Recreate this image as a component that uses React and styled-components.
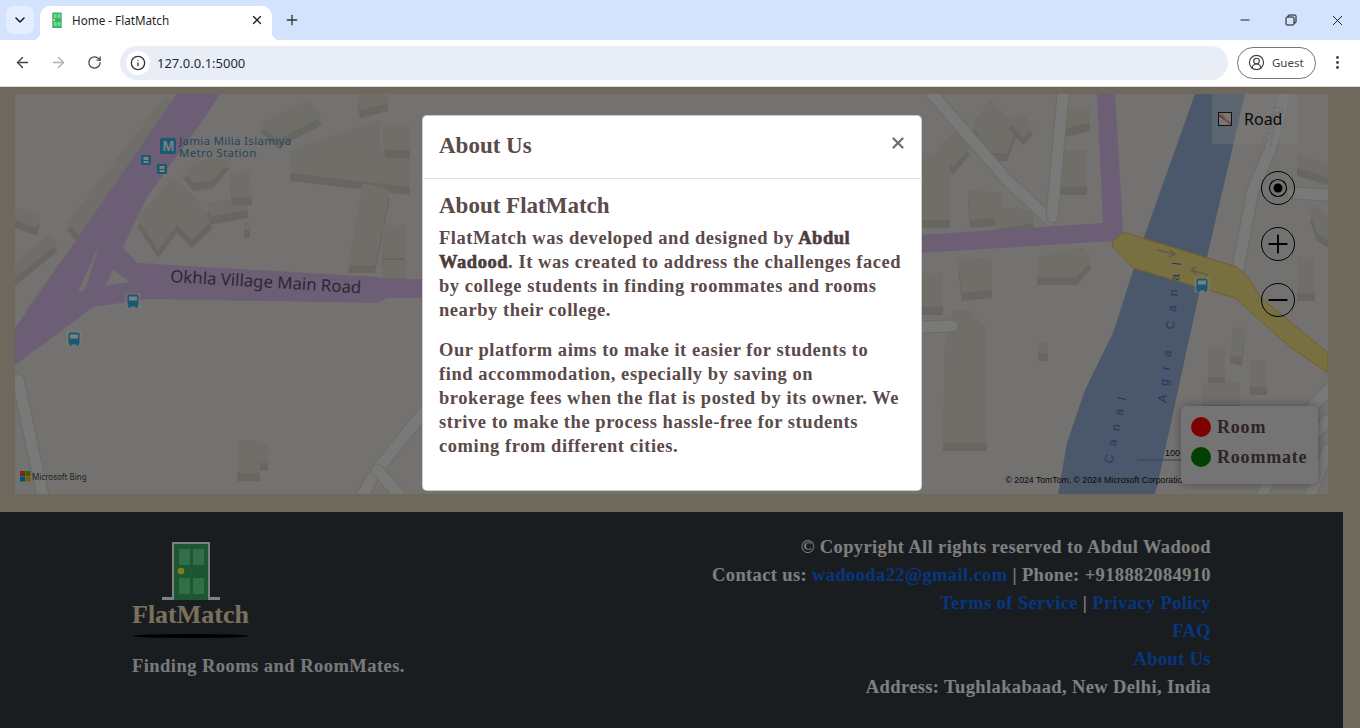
// App.jsx
import React from 'react';
import styled, { createGlobalStyle } from 'styled-components';
import { ArrowLeft, ArrowRight, RotateCw, Info, X, Plus, Minus, ChevronDown, CircleUserRound, EllipsisVertical } from 'lucide-react';

const GlobalStyle = createGlobalStyle`
  html, body { margin: 0; padding: 0; height: 100%; overflow: hidden; }
  body { font-family: "Liberation Serif", serif; }
`;

const Root = styled.div`
  width: 1360px;
  height: 728px;
  display: flex;
  flex-direction: column;
  overflow: hidden;
`;

/* browser chrome */
const TabStrip = styled.div`
  height: 40px;
  background: #d3e3fd;
  display: flex;
  align-items: flex-end;
  padding-left: 6px;
  flex: none;
`;
const TabSearch = styled.div`
  width: 28px;
  height: 28px;
  margin: 0 6px 6px 0;
  border-radius: 8px;
  background: #e4edfd;
  color: #1f1f1f;
  display: flex;
  align-items: center;
  justify-content: center;
`;
const Tab = styled.div`
  position: relative;
  width: 232px;
  height: 34px;
  box-sizing: border-box;
  padding: 0 8px 6px 9px;
  background: #fff;
  border-radius: 10px 10px 0 0;
  display: flex;
  align-items: center;
  color: #1f1f1f;
  font: 11.7px "Noto Sans", sans-serif;
  &::before, &::after {
    content: '';
    position: absolute;
    bottom: 0;
    width: 8px;
    height: 8px;
  }
  &::before { left: -8px; background: radial-gradient(circle at 0 0, #d3e3fd 8px, #fff 8.5px); }
  &::after { right: -8px; background: radial-gradient(circle at 100% 0, #d3e3fd 8px, #fff 8.5px); }
`;
const TabTitle = styled.span`
  flex: 1;
  margin-left: 7px;
`;
const NewTab = styled.div`
  margin: 0 0 12px 12px;
  color: #333;
  display: flex;
`;
const WindowControls = styled.div`
  margin-left: auto;
  height: 40px;
  display: flex;
  align-items: center;
`;
const WindowButton = styled.div`
  width: 46px;
  height: 40px;
  display: flex;
  align-items: center;
  justify-content: center;
  color: #111;
`;
const Toolbar = styled.div`
  height: 47px;
  box-sizing: border-box;
  background: #fff;
  border-radius: 8px 8px 0 0;
  border-bottom: 1px solid #d8d8d8;
  display: flex;
  align-items: center;
  padding: 0 0 1px 4px;
  flex: none;
`;
const NavButton = styled.div`
  width: 36px;
  height: 36px;
  display: flex;
  align-items: center;
  justify-content: center;
  color: ${p => (p.$off ? '#b0b0b0' : '#444')};
`;
const Omnibox = styled.div`
  width: 1108px;
  height: 34px;
  margin-left: 8px;
  background: #e9eef6;
  border-radius: 17px;
  display: flex;
  align-items: center;
  padding-left: 6px;
  box-sizing: border-box;
  font: 13px "Noto Sans", sans-serif;
  color: #1f2a3a;
`;
const InfoChip = styled.div`
  width: 24px;
  height: 24px;
  border-radius: 50%;
  background: #fff;
  color: #333;
  display: flex;
  align-items: center;
  justify-content: center;
  margin-right: 7px;
`;
const GuestPill = styled.div`
  width: 79px;
  height: 32px;
  box-sizing: border-box;
  margin-left: 9px;
  border: 1px solid #777;
  border-radius: 16px;
  display: flex;
  align-items: center;
  gap: 7px;
  padding-left: 10px;
  color: #444;
  font: 11.5px "Noto Sans", sans-serif;
`;
const MenuDots = styled.div`
  margin-left: 13px;
  display: flex;
  color: #444;
`;

/* page */
const Viewport = styled.div`
  position: relative;
  flex: 1;
  min-height: 0;
  background: #dcd2b8;
`;
const Page = styled.div`
  width: 1343px;
  height: 100%;
  display: flex;
  flex-direction: column;
`;
const MapWrap = styled.div`
  position: relative;
  width: 1313px;
  height: 400px;
  margin: 7px 15px 18px;
  overflow: hidden;
  flex: none;
`;
const MapCanvas = styled.svg`
  display: block;
  width: 100%;
  height: 100%;
  background: #e6e4e0;
`;
const RoadPicker = styled.div`
  position: absolute;
  top: 0;
  left: 1197px;
  width: 86px;
  height: 50px;
  box-sizing: border-box;
  padding-left: 6px;
  background: rgba(255, 255, 255, 0.35);
  display: flex;
  align-items: center;
  gap: 12px;
  font: 16px "Noto Sans", sans-serif;
  color: #111;
`;
const RoadSwatch = styled.svg`
  width: 14px;
  height: 14px;
`;
const ZoomStack = styled.div`
  position: absolute;
  top: 77px;
  left: 1246px;
  display: flex;
  flex-direction: column;
  gap: 22px;
`;
const ZoomButton = styled.div`
  width: 34px;
  height: 34px;
  box-sizing: border-box;
  border: 1.5px solid #000;
  border-radius: 50%;
  display: flex;
  align-items: center;
  justify-content: center;
  color: #000;
`;
const Legend = styled.div`
  position: absolute;
  top: 312px;
  left: 1166px;
  width: 137px;
  height: 78px;
  box-sizing: border-box;
  padding: 11px 10px;
  background: #eaE9e8;
  border-radius: 5px;
  box-shadow: 0 0 10px rgba(0, 0, 0, 0.35);
  display: flex;
  flex-direction: column;
  gap: 10px;
`;
const LegendRow = styled.div`
  display: flex;
  align-items: center;
  gap: 6px;
  height: 20px;
  font: 700 18px "Liberation Serif", serif;
  color: #5a4a4a;
  letter-spacing: 0.8px;
`;
const LegendDot = styled.span`
  width: 20px;
  height: 20px;
  border-radius: 50%;
  background: ${p => p.$color};
`;

/* footer */
const Footer = styled.footer`
  flex: 1;
  background: #343a40;
  padding: 21px 132px 0;
  display: flex;
  justify-content: space-between;
  color: #fff;
  font: 700 18.5px/28px "Liberation Serif", serif;
  letter-spacing: 0.37px;
`;
const Brand = styled.div`
  display: flex;
  flex-direction: column;
  padding-top: 9px;
`;
const LogoBlock = styled.div`
  width: 117px;
  display: flex;
  flex-direction: column;
  align-items: center;
`;
const LogoName = styled.div`
  font: 700 26px/30px "Liberation Serif", serif;
  letter-spacing: 0;
  color: #f4e2b8;
`;
const LogoShadow = styled.div`
  width: 117px;
  height: 4px;
  margin-top: 4px;
  border-radius: 50%;
  background: #000;
`;
const Tagline = styled.div`
  margin-top: 14px;
  letter-spacing: 0.46px;
  color: #f0f4f8;
`;
const Contact = styled.div`
  text-align: right;
`;
const Line = styled.div`
  height: 28px;
`;
const FooterLink = styled.a`
  color: #0d6efd;
  text-decoration: none;
`;

/* modal */
const Backdrop = styled.div`
  position: absolute;
  inset: 0;
  background: rgba(0, 0, 0, 0.5);
`;
const Modal = styled.div`
  position: absolute;
  top: 28px;
  left: 422px;
  width: 500px;
  box-sizing: border-box;
  background: #fff;
  border: 1px solid rgba(0, 0, 0, 0.2);
  border-radius: 5px;
  color: #5a4a4a;
`;
const ModalHeader = styled.div`
  height: 63px;
  box-sizing: border-box;
  padding: 0 16px;
  border-bottom: 1px solid #dee2e6;
  display: flex;
  align-items: center;
  justify-content: space-between;
`;
const ModalTitle = styled.h5`
  margin: 0 0 3px;
  font: 700 23px/30px "Liberation Serif", serif;
`;
const CloseButton = styled.span`
  display: flex;
  color: #6f6f6f;
  margin: 0 -2px 8px 0;
`;
const ModalBody = styled.div`
  padding: 16px;
`;
const BodyHeading = styled.h4`
  margin: 0 0 9px;
  font: 700 23px/22px "Liberation Serif", serif;
`;
const Para = styled.p`
  max-width: 463px;
  margin: 0 0 16px;
  font: 700 18.5px/24px "Liberation Serif", serif;
  letter-spacing: 0.55px;
  strong { font-weight: 700; color: #4a3c3c; -webkit-text-stroke: 0.6px #4a3c3c; }
`;

const Door = ({ size }) => (
  <svg width={size} height={size} viewBox="0 0 58 58">
    <path d="M0 58v-3h10V0h38v55h10v3z" fill="#fff" />
    <rect x="12" y="2" width="34" height="56" fill="#3cab66" />
    <rect x="17" y="7" width="11" height="16" fill="#5ee08e" />
    <rect x="31" y="7" width="11" height="16" fill="#5ee08e" />
    <rect x="17" y="36" width="11" height="16" fill="#5ee08e" />
    <rect x="31" y="36" width="11" height="16" fill="#5ee08e" />
    <circle cx="19" cy="29" r="3.3" fill="#ffff30" />
  </svg>
);

const buildings = [
  '15,207 40,216 37,228 15,220', '15,262 50,234 58,243 15,278', '25,310 73,245 85,250 38,318',
  '67,223 167,94 183,120 100,257', '183,170 210,157 230,160 213,180 193,183',
  '137,218 173,178 190,192 213,220 192,240 177,225 158,250', '207,203 247,196 248,210 210,217',
  '230,173 250,171 252,197 232,197', '244,222 250,222 250,230 244,230', '260,123 310,100 322,117 277,140',
  '290,150 380,120 380,152 410,153 410,187 290,173', '363,183 390,190 375,265 348,265',
  '383,125 410,125 410,150 385,150', '382,225 405,225 405,258 382,258', '383,260 407,260 407,278 383,278',
  '357,94 388,94 388,103 360,110', '237,440 257,440 257,443 268,443 268,463 260,463 260,473 237,473',
  '937,147 957,130 970,147 953,167', '972,123 990,100 1017,127 1007,153 987,153',
  '1007,120 1023,113 1033,127 1023,137', '1060,110 1090,108 1090,123 1060,130',
  '1060,150 1087,150 1087,187 1060,187', '968,190 1003,193 1003,217 970,220',
  '995,207 1033,210 1033,223 995,230', '920,153 950,153 950,220 920,220', '920,273 943,273 943,307 920,307',
  '958,260 992,257 992,290 962,293', '1037,257 1083,247 1092,260 1077,277 1037,277',
  '953,310 970,310 987,330 987,443 943,443 945,340', '1038,342 1048,342 1048,353 1038,353',
  '1208,347 1225,347 1225,377 1208,377', '1233,327 1245,328 1242,358 1230,355',
  '1250,360 1267,360 1267,387 1250,387', '1202,383 1240,382 1240,405 1202,405',
  '1297,153 1328,163 1328,177 1297,168', '1310,213 1315,205 1328,217 1328,240 1317,233',
  '1297,257 1315,257 1315,293 1297,293',
];

const roads = [
  'M18,380 L43,496', 'M423,413 L377,470 L362,496', 'M377,470 L400,496', 'M1285,94 L1270,150 L1253,190 L1238,268',
  'M1293,193 L1328,195', 'M933,95 L1007,180 L1050,220', 'M1063,95 L1052,217', 'M920,327 L952,326',
  'M1328,390 L1290,430 L1262,496', 'M1328,420 L1300,450', 'M1328,450 L1310,496',
];

const Bus = ({ x, y, s }) => (
  <g transform={`translate(${x} ${y}) scale(${s})`}>
    <rect x="-1" y="-1" width="16" height="16" rx="2" fill="#ffffff" opacity="0.4" />
    <rect x="1.5" y="0.5" width="11" height="12" rx="2" fill="#30b4e8" />
    <rect x="3" y="2.5" width="8" height="4" fill="#ffffff" />
    <rect x="2.5" y="12" width="2" height="2" fill="#30b4e8" />
    <rect x="9.5" y="12" width="2" height="2" fill="#30b4e8" />
  </g>
);

const Stop = ({ x, y }) => (
  <g transform={`translate(${x} ${y})`}>
    <rect width="10" height="10" rx="1" fill="#30b4e8" />
    <rect x="2.5" y="2" width="5" height="3" fill="#ffffff" />
    <rect x="2.5" y="6" width="5" height="2" fill="#ffffff" />
  </g>
);

const MapDrawing = () => (
  <MapCanvas viewBox="15 94 1313 400">
    {buildings.map((pts, i) => (
      <g key={i}>
        <polygon points={pts} fill="#cecCC0" transform="translate(0 8)" />
        <polygon points={pts} fill="#dedcd2" />
      </g>
    ))}
    {roads.map((d, i) => (
      <g key={i} fill="none" strokeLinejoin="round" strokeLinecap="round">
        <path d={d} stroke="#dcd4bc" strokeWidth="13" />
        <path d={d} stroke="#f2f2f2" strokeWidth="11" />
      </g>
    ))}
    <polygon points="1195,94 1245,94 1207,257 1160,473 1155,494 1058,494 1067,443 1085,390 1113,333 1143,240" fill="#96aed4" />
    <polygon points="177,94 220,94 203,120 147,197 123,247 137,263 377,277 387,280 423,279 423,298 387,298 378,303 147,299 93,307 15,365 15,328 83,230" fill="#d8bce8" />
    <polygon points="113,270 130,282 105,286" fill="#e6e4e0" />
    <polygon points="100,243 78,292 85,290" fill="#e6e4e0" />
    <polygon points="1097,94 1115,94 1123,228 1122,236 1113,241 920,253 920,235 1103,223" fill="#d8bce8" />
    <polygon points="1123,232 1237,267 1248,277 1260,297 1328,353 1328,373 1290,347 1235,298 1133,268 1113,247 1112,242" fill="#f0e080" stroke="#eab858" />
    <path d="M1157,250l18,4m-5,-4l5,4l-6,3M1208,275l-17,-5m5,-3l-5,3l5,4" fill="none" stroke="#c4b490" strokeWidth="1.5" />

    <text x="170" y="282" transform="rotate(3.4 170 282)" fontFamily="Noto Sans, sans-serif" fontSize="16.8" fill="#5c4c70">Okhla Village Main Road</text>
    <rect x="160" y="138" width="16" height="16" rx="2" fill="#30b4e8" />
    <text x="162.5" y="151" fontFamily="Liberation Sans, sans-serif" fontSize="14" fontWeight="700" fill="#fff">M</text>
    <text fontFamily="Noto Sans, sans-serif" fontSize="11.5" fill="#4a90b8" letterSpacing="0.3">
      <tspan x="179" y="145">Jamia Milia Islamiya</tspan>
      <tspan x="179" y="157">Metro Station</tspan>
    </text>
    <Stop x={141} y={155} />
    <Stop x={157} y={164} />
    <Bus x={126} y={294} s={1} />
    <Bus x={67} y={332} s={1} />
    <Bus x={1195} y={278} s={1} />

    <g fontFamily="Liberation Sans, sans-serif" fontSize="12" fill="#4a70d0" letterSpacing="9">
      <text transform="translate(1166 403) rotate(-84)">Agra Canal</text>
      <text transform="translate(1112 464) rotate(-78)">Canal</text>
    </g>
    <text transform="translate(1271 146) rotate(-75)" fontFamily="Noto Sans, sans-serif" fontSize="13" fill="#cccccc">Sailing</text>

    <text x="1165" y="456" fontFamily="Liberation Sans, sans-serif" fontSize="9" fill="#111">100</text>
    <path d="M1137.5,460H1190" stroke="#4a90e0" strokeWidth="1" />
    <text x="1005.5" y="483" fontFamily="Liberation Sans, sans-serif" fontSize="8.7" fill="#111">© 2024 TomTom, © 2024 Microsoft Corporation</text>

    <rect x="20" y="471" width="5" height="5" fill="#f25022" />
    <rect x="25.5" y="471" width="5" height="5" fill="#7fba00" />
    <rect x="20" y="476.5" width="5" height="5" fill="#00a4ef" />
    <rect x="25.5" y="476.5" width="5" height="5" fill="#ffb900" />
    <text x="32" y="480" fontFamily="Noto Sans, sans-serif" fontSize="8" fill="#444">Microsoft Bing</text>
  </MapCanvas>
);

export default function App() {
  return (
    <Root>
      <GlobalStyle />
      <TabStrip>
        <TabSearch><ChevronDown size={16} strokeWidth={2.4} /></TabSearch>
        <Tab>
          <Door size={16} />
          <TabTitle>Home - FlatMatch</TabTitle>
          <X size={14} strokeWidth={2.2} />
        </Tab>
        <NewTab><Plus size={16} strokeWidth={2} /></NewTab>
        <WindowControls>
          <WindowButton><Minus size={14} strokeWidth={1.6} /></WindowButton>
          <WindowButton>
            <svg width="12" height="12" viewBox="0 0 12 12" fill="none" stroke="#111" strokeWidth="1">
              <rect x="1" y="3" width="8" height="8" rx="1" />
              <path d="M3 3V2a1 1 0 0 1 1-1h6a1 1 0 0 1 1 1v6a1 1 0 0 1-1 1H9" />
            </svg>
          </WindowButton>
          <WindowButton><X size={17} strokeWidth={1.3} /></WindowButton>
        </WindowControls>
      </TabStrip>
      <Toolbar>
        <NavButton><ArrowLeft size={17} strokeWidth={2} /></NavButton>
        <NavButton $off><ArrowRight size={17} strokeWidth={2} /></NavButton>
        <NavButton><RotateCw size={15} strokeWidth={2} /></NavButton>
        <Omnibox>
          <InfoChip><Info size={16} strokeWidth={2} /></InfoChip>
          127.0.0.1:5000
        </Omnibox>
        <GuestPill><CircleUserRound size={17} strokeWidth={1.7} />Guest</GuestPill>
        <MenuDots><EllipsisVertical size={17} strokeWidth={2.2} /></MenuDots>
      </Toolbar>

      <Viewport>
        <Page>
          <MapWrap>
            <MapDrawing />
            <RoadPicker>
              <RoadSwatch viewBox="0 0 14 14">
                <rect x="0.5" y="0.5" width="13" height="13" fill="#eee" stroke="#222" />
                <path d="M1 3l12 9" stroke="#c860c0" strokeWidth="2" />
                <path d="M3 1l9 12" stroke="#ecc860" strokeWidth="1.5" />
              </RoadSwatch>
              Road
            </RoadPicker>
            <ZoomStack>
              <ZoomButton>
                <svg width="24" height="24" viewBox="0 0 24 24" fill="none" stroke="#000">
                  <circle cx="12" cy="12" r="8.5" strokeWidth="1.2" />
                  <circle cx="12" cy="12" r="4.5" fill="#000" stroke="none" />
                </svg>
              </ZoomButton>
              <ZoomButton><Plus size={30} strokeWidth={1.5} /></ZoomButton>
              <ZoomButton><Minus size={30} strokeWidth={1.5} /></ZoomButton>
            </ZoomStack>
            <Legend>
              <LegendRow><LegendDot $color="#ff0000" />Room</LegendRow>
              <LegendRow><LegendDot $color="#008000" />Roommate</LegendRow>
            </Legend>
          </MapWrap>
          <Footer>
            <Brand>
              <LogoBlock>
                <Door size={58} />
                <LogoName>FlatMatch</LogoName>
                <LogoShadow />
              </LogoBlock>
              <Tagline>Finding Rooms and RoomMates.</Tagline>
            </Brand>
            <Contact>
              <Line>© Copyright All rights reserved to Abdul Wadood</Line>
              <Line>Contact us: <FooterLink>wadooda22@gmail.com</FooterLink> | Phone: +918882084910</Line>
              <Line><FooterLink>Terms of Service</FooterLink> | <FooterLink>Privacy Policy</FooterLink></Line>
              <Line><FooterLink>FAQ</FooterLink></Line>
              <Line><FooterLink>About Us</FooterLink></Line>
              <Line>Address: Tughlakabaad, New Delhi, India</Line>
            </Contact>
          </Footer>
        </Page>
        <Backdrop />
        <Modal>
          <ModalHeader>
            <ModalTitle>About Us</ModalTitle>
            <CloseButton><X size={18} strokeWidth={3} /></CloseButton>
          </ModalHeader>
          <ModalBody>
            <BodyHeading>About FlatMatch</BodyHeading>
            <Para>
              FlatMatch was developed and designed by <strong>Abdul Wadood</strong>. It was created to address the challenges faced by college students in finding roommates and rooms nearby their college.
            </Para>
            <Para>
              Our platform aims to make it easier for students to find accommodation, especially by saving on brokerage fees when the flat is posted by its owner. We strive to make the process hassle-free for students coming from different cities.
            </Para>
          </ModalBody>
        </Modal>
      </Viewport>
    </Root>
  );
}
